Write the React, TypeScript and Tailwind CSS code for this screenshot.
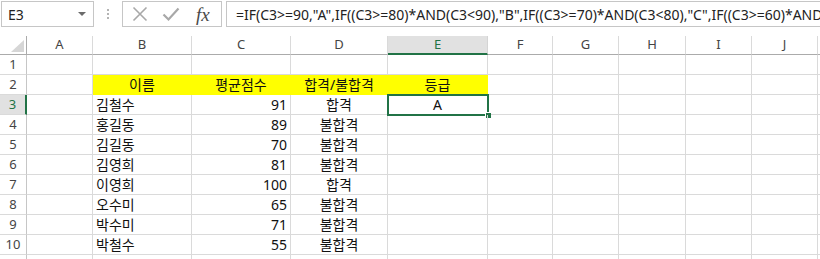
import React from "react";

const cols = ["A", "B", "C", "D", "E", "F", "G", "H", "I", "J", ""];

const rows: { name: string; score: string; pass: string; grade: string }[] = [
    { name: "김철수", score: "91", pass: "합격", grade: "A" },
    { name: "홍길동", score: "89", pass: "불합격", grade: "" },
    { name: "김길동", score: "70", pass: "불합격", grade: "" },
    { name: "김영희", score: "81", pass: "불합격", grade: "" },
    { name: "이영희", score: "100", pass: "합격", grade: "" },
    { name: "오수미", score: "65", pass: "불합격", grade: "" },
    { name: "박수미", score: "71", pass: "불합격", grade: "" },
    { name: "박철수", score: "55", pass: "불합격", grade: "" },
];

const formula =
    '=IF(C3>=90,"A",IF((C3>=80)*AND(C3<90),"B",IF((C3>=70)*AND(C3<80),"C",IF((C3>=60)*AND(C3<70),"D","F"))))';

const cell = "h-[20px] border-r border-b border-[#dadada] flex items-center px-[3px] whitespace-nowrap overflow-hidden";
const yellow = "h-[20px] bg-[#ffff00] border-r border-b border-[#ffff00] flex items-center justify-center whitespace-nowrap";
const rowHead =
    "h-[20px] border-r border-[#c6c6c6] border-b border-b-[#dadada] flex items-center justify-center text-[13px] text-[#444]";

const FormulaBar: React.FC = () => (
    <div className="h-[36px] flex items-start pt-[1px] pl-[1px]">
        <div className="w-[93px] h-[26px] border border-[#c6c6c6] flex items-center justify-between pl-[6px] pr-[7px]">
            <span className="text-[14px] text-[#222]">E3</span>
            <span className="w-0 h-0 border-l-[4px] border-r-[4px] border-t-[4px] border-l-transparent border-r-transparent border-t-[#6b6b6b]" />
        </div>
        <div className="w-[28px] h-[26px] flex flex-col items-center justify-center gap-[2px]">
            <span className="w-[2px] h-[2px] bg-[#b4b4b4]" />
            <span className="w-[2px] h-[2px] bg-[#b4b4b4]" />
            <span className="w-[2px] h-[2px] bg-[#b4b4b4]" />
        </div>
        <div className="w-[100px] h-[26px] border border-[#c6c6c6] flex items-center pl-[9px] gap-[14px]">
            <svg width="16" height="16" viewBox="0 0 16 16">
                <path d="M1.5 1.5 L14.5 14.5 M14.5 1.5 L1.5 14.5" stroke="#a8a8a8" strokeWidth="1.6" />
            </svg>
            <svg width="18" height="16" viewBox="0 0 18 16">
                <path d="M1.5 8.5 L6.5 13.5 L16.5 2.5" stroke="#a8a8a8" strokeWidth="2.2" fill="none" />
            </svg>
            <span className="text-[19px] italic text-[#4a4a4a] leading-none font-['Liberation_Serif',serif] ml-[2px]">fx</span>
        </div>
        <div className="flex-1 h-[26px] ml-[4px] border-l border-t border-b border-[#c6c6c6] flex items-center pl-[9px] overflow-hidden">
            <span className="text-[14px] text-[#222] whitespace-nowrap">{formula}</span>
        </div>
    </div>
);

const Grid: React.FC = () => (
    <div className="grid grid-cols-[27px_66px_99px_99px_97px_100px_65px_66px_67px_66px_66px_1fr]">
        <div className="h-[19px] border-r border-b border-[#ababab] flex items-end justify-end pr-[2px] pb-[2px]">
            <svg width="13" height="12" viewBox="0 0 13 12">
                <path d="M13 0 L13 12 L0 12 Z" fill="#d6d6d6" />
            </svg>
        </div>
        {cols.map((c) =>
            c === "E" ? (
                <div
                    key={c}
                    className="h-[19px] bg-[#e1e1e1] border-r border-[#d4d4d4] border-b-2 border-b-[#217346] flex items-center justify-center text-[13px] text-[#217346]"
                >
                    {c}
                </div>
            ) : (
                <div
                    key={c || "end"}
                    className="h-[19px] border-r border-[#dadada] border-b border-b-[#ababab] flex items-center justify-center text-[13px] text-[#444]"
                >
                    {c}
                </div>
            )
        )}

        {/* row 1 */}
        <div className={rowHead}>1</div>
        {cols.map((c) => (
            <div key={"r1" + c} className={cell} />
        ))}

        {/* row 2 */}
        <div className={rowHead}>2</div>
        <div className={cell} />
        <div className={yellow}>이름</div>
        <div className={yellow}>평균점수</div>
        <div className={yellow}>합격/불합격</div>
        <div className={yellow}>등급</div>
        {cols.slice(5).map((c) => (
            <div key={"r2" + c} className={cell} />
        ))}

        {rows.map((r, i) => {
            const n = i + 3;
            const active = n === 3;
            return (
                <React.Fragment key={n}>
                    <div
                        className={
                            active
                                ? "h-[20px] bg-[#e1e1e1] border-r-2 border-[#217346] border-b border-b-[#dadada] flex items-center justify-center text-[13px] text-[#217346]"
                                : rowHead
                        }
                    >
                        {n}
                    </div>
                    <div className={cell} />
                    <div className={cell}>{r.name}</div>
                    <div className={cell + " justify-end"}>{r.score}</div>
                    <div className={cell + " justify-center"}>{r.pass}</div>
                    <div className={cell + " justify-center relative overflow-visible"}>
                        {r.grade}
                        {active && (
                            <>
                                <span className="absolute left-[-1px] top-[-1px] right-[-2px] bottom-[-2px] border-2 border-[#217346] pointer-events-none" />
                                <span className="absolute right-[-4px] bottom-[-4px] w-[6px] h-[6px] bg-[#217346] border-l border-t border-white" />
                            </>
                        )}
                    </div>
                    {cols.slice(5).map((c) => (
                        <div key={"r" + n + c} className={cell} />
                    ))}
                </React.Fragment>
            );
        })}

        {/* row 11, cut off by the window */}
        <div className={rowHead} />
        {cols.map((c) => (
            <div key={"r11" + c} className={cell} />
        ))}
    </div>
);

const App: React.FC = () => {
    return (
        <div className="w-[820px] h-[259px] overflow-hidden bg-white text-[14px] text-[#111] font-['Noto_Sans','Noto_Sans_CJK_KR',sans-serif]">
            <FormulaBar />
            <Grid />
        </div>
    );
};

export default App;
